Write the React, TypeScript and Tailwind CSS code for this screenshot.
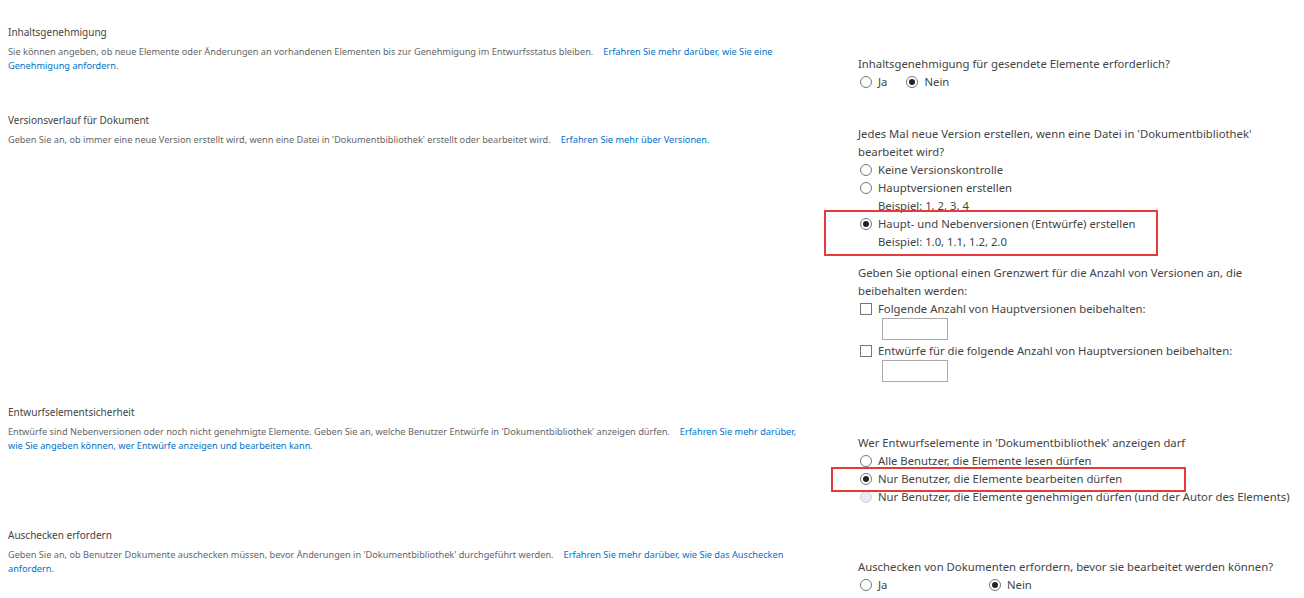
const font = "font-['Noto_Sans','Open_Sans',sans-serif]";

function Radio({ checked = false, disabled = false }: { checked?: boolean; disabled?: boolean }) {
  return (
    <span
      className={`ml-[2px] mr-[6px] flex h-[12px] w-[12px] shrink-0 items-center justify-center rounded-full border ${
        disabled ? "border-[#d4d4d4] bg-[#ececec]" : "border-[#777] bg-white"
      }`}
    >
      {checked && <span className="h-[6px] w-[6px] rounded-full bg-[#222]" />}
    </span>
  );
}

function Checkbox() {
  return <span className="ml-[2px] mr-[6px] h-[12px] w-[12px] shrink-0 border border-[#777] bg-white" />;
}

function Option({ children, checked, disabled }: { children: React.ReactNode; checked?: boolean; disabled?: boolean }) {
  return (
    <div className="flex items-center">
      <Radio checked={checked} disabled={disabled} />
      <span>{children}</span>
    </div>
  );
}

function Section({
  title,
  children,
  right,
  rightTop,
  bottom,
}: {
  title: string;
  children: React.ReactNode;
  right: React.ReactNode;
  rightTop: string;
  bottom: string;
}) {
  return (
    <div className={`flex items-start ${bottom}`}>
      <div className="w-[858px] shrink-0 pl-2">
        <h3 className="text-[10px] leading-[14px] text-[#444]">{title}</h3>
        <p className="mt-[6px] whitespace-nowrap text-[9.2px] leading-[14px] text-[#666]">{children}</p>
      </div>
      <div className={`${rightTop} whitespace-nowrap text-[11.3px] leading-[18px] text-[#444]`}>{right}</div>
    </div>
  );
}

const link = "text-[#0072c6]";

export default function App() {
  return (
    <main className={`${font} min-h-[598px] w-[1304px] bg-white pt-[25px]`}>
      <Section
        title="Inhaltsgenehmigung"
        rightTop="mt-[30px]"
        bottom="pb-[22px]"
        right={
          <>
            <div>Inhaltsgenehmigung für gesendete Elemente erforderlich?</div>
            <div className="flex items-center">
              <Option>Ja</Option>
              <span className="w-[17px]" />
              <Option checked>Nein</Option>
            </div>
          </>
        }
      >
        Sie können angeben, ob neue Elemente oder Änderungen an vorhandenen Elementen bis zur Genehmigung im Entwurfsstatus bleiben.
        <span className={`ml-[10px] ${link}`}>Erfahren Sie mehr darüber, wie Sie eine</span>
        <br />
        <span className={link}>Genehmigung anfordern.</span>
      </Section>

      <Section
        title="Versionsverlauf für Dokument"
        rightTop="mt-[12px]"
        bottom="pb-[23px]"
        right={
          <>
            <div>
              Jedes Mal neue Version erstellen, wenn eine Datei in 'Dokumentbibliothek'
              <br />
              bearbeitet wird?
            </div>
            <Option>Keine Versionskontrolle</Option>
            <Option>Hauptversionen erstellen</Option>
            <div className="pl-[20px]">Beispiel: 1, 2, 3, 4</div>
            <div className="relative">
              <Option checked>Haupt- und Nebenversionen (Entwürfe) erstellen</Option>
              <div className="pl-[20px]">Beispiel: 1.0, 1.1, 1.2, 2.0</div>
              <div className="pointer-events-none absolute -top-[5px] -bottom-[5px] -left-[34px] w-[334px] border-2 border-[#e5393b]" />
            </div>
            <div className="mt-[13px]">
              Geben Sie optional einen Grenzwert für die Anzahl von Versionen an, die
              <br />
              beibehalten werden:
            </div>
            <div className="flex items-center">
              <Checkbox />
              <span>Folgende Anzahl von Hauptversionen beibehalten:</span>
            </div>
            <div className="mb-[2px] ml-[24px] h-[22px] w-[66px] border border-[#ababab]" />
            <div className="flex items-center">
              <Checkbox />
              <span>Entwürfe für die folgende Anzahl von Hauptversionen beibehalten:</span>
            </div>
            <div className="ml-[24px] h-[22px] w-[66px] border border-[#ababab]" />
          </>
        }
      >
        Geben Sie an, ob immer eine neue Version erstellt wird, wenn eine Datei in 'Dokumentbibliothek' erstellt oder bearbeitet wird.
        <span className={`ml-[10px] ${link}`}>Erfahren Sie mehr über Versionen.</span>
      </Section>

      <Section
        title="Entwurfselementsicherheit"
        rightTop="mt-[29px]"
        bottom="pb-[22px]"
        right={
          <>
            <div>Wer Entwurfselemente in 'Dokumentbibliothek' anzeigen darf</div>
            <Option>Alle Benutzer, die Elemente lesen dürfen</Option>
            <div className="relative">
              <Option checked>Nur Benutzer, die Elemente bearbeiten dürfen</Option>
              <div className="pointer-events-none absolute -top-[3px] -bottom-[4px] -left-[27px] w-[355px] border-2 border-[#e5393b]" />
            </div>
            <Option disabled>Nur Benutzer, die Elemente genehmigen dürfen (und der Autor des Elements)</Option>
          </>
        }
      >
        Entwürfe sind Nebenversionen oder noch nicht genehmigte Elemente. Geben Sie an, welche Benutzer Entwürfe in 'Dokumentbibliothek' anzeigen dürfen.
        <span className={`ml-[10px] ${link}`}>Erfahren Sie mehr darüber,</span>
        <br />
        <span className={link}>wie Sie angeben können, wer Entwürfe anzeigen und bearbeiten kann.</span>
      </Section>

      <Section
        title="Auschecken erfordern"
        rightTop="mt-[30px]"
        bottom="pb-0"
        right={
          <>
            <div>Auschecken von Dokumenten erfordern, bevor sie bearbeitet werden können?</div>
            <div className="flex items-center">
              <div className="w-[129px]">
                <Option>Ja</Option>
              </div>
              <Option checked>Nein</Option>
            </div>
          </>
        }
      >
        Geben Sie an, ob Benutzer Dokumente auschecken müssen, bevor Änderungen in 'Dokumentbibliothek' durchgeführt werden.
        <span className={`ml-[10px] ${link}`}>Erfahren Sie mehr darüber, wie Sie das Auschecken</span>
        <br />
        <span className={link}>anfordern.</span>
      </Section>
    </main>
  );
}
